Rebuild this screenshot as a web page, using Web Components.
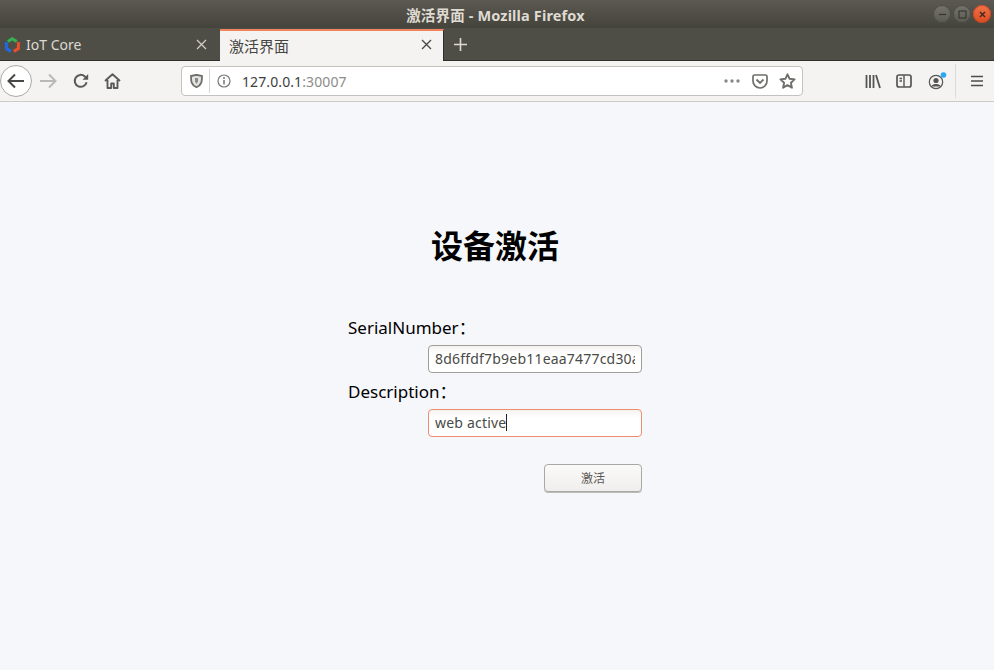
<!DOCTYPE html>
<html lang="zh">
<head>
<meta charset="utf-8">
<title>激活界面</title>
<style>
  html, body { margin: 0; height: 100%; }
  body { width: 994px; height: 670px; overflow: hidden; font-family: "Noto Sans", "Noto Sans CJK SC", sans-serif; }
</style>
</head>
<body>
<browser-window>
  <activate-form></activate-form>
</browser-window>

<script>
const SANS = '"Noto Sans", "Noto Sans CJK SC", sans-serif';

class WindowTitlebar extends HTMLElement {
  connectedCallback() {
    this.attachShadow({ mode: 'open' }).innerHTML = `
      <style>
        :host {
          display: flex; align-items: center; justify-content: center; position: relative;
          height: 28px; box-sizing: border-box; padding-right: 3px;
          background: linear-gradient(#5b5951, #45443c);
          color: #dfdbd2; font: 700 14.5px ${SANS}; letter-spacing: .15px;
        }
        .buttons { position: absolute; right: 3px; top: 5px; display: flex; gap: 2px; }
        .buttons span {
          width: 18px; height: 18px; border-radius: 50%;
          background: linear-gradient(#74736c, #5a5952);
          box-shadow: inset 0 0 0 1px #4a4943;
          display: flex; align-items: center; justify-content: center;
        }
        .buttons .close { background: linear-gradient(#f0734a, #dc4a20); box-shadow: inset 0 0 0 1px #c9481f; }
        svg { display: block; }
      </style>
      <span>激活界面 - Mozilla Firefox</span>
      <div class="buttons">
        <span><svg width="9" height="9"><path d="M1 4.500h7" stroke="#35342f" stroke-width="1.200"/></svg></span>
        <span><svg width="9" height="9"><rect x="1" y="1" width="7" height="7" fill="none" stroke="#35342f" stroke-width="1.100"/></svg></span>
        <span class="close"><svg width="9" height="9"><path d="M2 2l5 5M7 2l-5 5" stroke="#3a2a20" stroke-width="1.400"/></svg></span>
      </div>`;
  }
}

class TabStrip extends HTMLElement {
  connectedCallback() {
    this.attachShadow({ mode: 'open' }).innerHTML = `
      <style>
        :host {
          display: flex; height: 33px; box-sizing: border-box;
          background: #4f4e46; border-bottom: 1px solid #2f2e2a;
          font: 14px ${SANS};
        }
        .tab { display: flex; align-items: center; box-sizing: border-box; position: relative; }
        .tab svg.close { position: absolute; }
        .one { width: 220px; color: #dcdad3; padding: 0 0 0 26px; }
        .one .fav { position: absolute; left: 4px; top: 8px; }
        .one svg.close { left: 196px; top: 11px; }
        .two {
          width: 224px; height: 32px; margin-top: 1px; background: #f4f3f1; color: #45443f;
          border-top: 2px solid #f0845c; border-right: 1px solid #2f2e2a; padding: 0 0 2px 9px;
          font-size: 15px;
        }
        .two svg.close { left: 201px; top: 8px; }
        .add { margin: 9px 0 0 9px; }
      </style>
      <div class="tab one">
        <svg class="fav" width="16" height="17" viewBox="0 0 16 17">
          <path d="M3.800 5.500 8.300 2.800 12.800 5.500" fill="none" stroke="#33b24f" stroke-width="3"/>
          <path d="M2.400 6V12.600L7 15.400" fill="none" stroke="#2268e2" stroke-width="3"/>
          <path d="M14.400 6V12.600L9.800 15.400" fill="none" stroke="#ea4f2a" stroke-width="3"/>
        </svg>
        <span>IoT Core</span>
        <svg class="close" width="11" height="11" viewBox="0 0 11 11"><path d="M1 1l9 9M10 1l-9 9" stroke="#cfcdc6" stroke-width="1.300"/></svg>
      </div>
      <div class="tab two">
        <span>激活界面</span>
        <svg class="close" width="11" height="11" viewBox="0 0 11 11"><path d="M1 1l9 9M10 1l-9 9" stroke="#4a4945" stroke-width="1.400"/></svg>
      </div>
      <svg class="add" width="15" height="15" viewBox="0 0 15 15"><path d="M7.500 1v13M1 7.500h13" stroke="#dcdad3" stroke-width="1.600"/></svg>`;
  }
}

class NavToolbar extends HTMLElement {
  connectedCallback() {
    this.attachShadow({ mode: 'open' }).innerHTML = `
      <style>
        :host {
          display: flex; align-items: center; height: 41px; box-sizing: border-box;
          background: #f4f3f1; border-bottom: 1px solid #cdccc9;
          font: 14px ${SANS}; position: relative;
        }
        svg { display: block; flex: none; }
        .back {
          width: 32px; height: 32px; box-sizing: border-box;
          border: 1px solid #aaa9a6; border-radius: 50%; background: #fff;
          display: flex; align-items: center; justify-content: center; flex: none;
        }
        .forward { margin-left: 8px; }
        .reload { margin-left: 16px; }
        .home { margin-left: 15px; }
        .urlbar {
          margin-left: 60px; width: 622px; height: 30px; box-sizing: border-box; flex: none;
          background: #fff; border: 1px solid #c3c2bf; border-radius: 4px;
          display: flex; align-items: center; color: #3e3e3c;
        }
        .urlbar .shield { margin-left: 8px; }
        .urlbar .sep { width: 1px; height: 24px; background: #d6d5d2; margin-left: 6px; }
        .urlbar .info { margin-left: 7px; }
        .url { margin-left: 11px; font-size: 14px; letter-spacing: .1px; white-space: nowrap; flex: 1; }
        .url b { font-weight: 400; color: #8c8c8a; }
        .dots { margin-right: 12px; }
        .pocket { margin-right: 11px; }
        .star { margin-right: 6px; }
        .lib { margin-left: 62px; }
        .side { margin-left: 15px; }
        .acct { margin-left: 16px; }
        .tsep { width: 1px; height: 34px; background: #dcdbd8; margin-left: 8px; flex: none; }
        .menu { margin-left: 15px; }
      </style>
      <div class="back">
        <svg width="18" height="16" viewBox="0 0 18 16"><path d="M1.500 8H17M8 1.500 1.500 8 8 14.500" fill="none" stroke="#484845" stroke-width="2"/></svg>
      </div>
      <svg class="forward" width="17" height="16" viewBox="0 0 17 16"><path d="M0 8H15.500M9 1.500 15.500 8 9 14.500" fill="none" stroke="#b9b8b5" stroke-width="2"/></svg>
      <svg class="reload" width="16" height="16" viewBox="0 0 16 16"><path d="M13.600 9.200A6 6 0 1 1 11.800 3.400L14 5.400" fill="none" stroke="#5a5a57" stroke-width="2"/><path d="M15.200 1V6.800H9.500Z" fill="#5a5a57"/></svg>
      <svg class="home" width="17" height="16" viewBox="0 0 17 16"><path d="M1 8 8.500 1.300 16 8M3.500 7v8h3.700v-4.500h2.600V15h3.700V7" fill="none" stroke="#5a5a57" stroke-width="1.900" stroke-linejoin="round"/></svg>
      <div class="urlbar">
        <svg class="shield" width="13" height="14" viewBox="0 0 13 14"><path d="M1 2 6.500.8 12 2c0 5 0 8.800-5.500 11.200C1 10.800 1 7 1 2Z" fill="#e4e4e2" stroke="#6e6e6b" stroke-width="1.800"/><path d="M5 4h3v3.500l-1.500 2.500-1.500-2.500Z" fill="#8a8a87"/></svg>
        <span class="sep"></span>
        <svg class="info" width="14" height="14" viewBox="0 0 14 14"><circle cx="7" cy="7" r="6" fill="none" stroke="#777774" stroke-width="1.200"/><path d="M7 6v4.500" stroke="#777774" stroke-width="1.500"/><circle cx="7" cy="3.900" r="1" fill="#777774"/></svg>
        <span class="url">127.0.0.1<b>:30007</b></span>
        <svg class="dots" width="16" height="4" viewBox="0 0 16 4"><circle cx="2" cy="2" r="1.700" fill="#888"/><circle cx="8" cy="2" r="1.700" fill="#888"/><circle cx="14" cy="2" r="1.700" fill="#888"/></svg>
        <svg class="pocket" width="16" height="15" viewBox="0 0 16 15"><path d="M1 2.500C1 1.500 1.500 1 2.500 1h11c1 0 1.500.5 1.500 1.500V7a7 7 0 0 1-14 0Z" fill="none" stroke="#6e6e6b" stroke-width="1.700"/><path d="M4.500 5.500 8 9l3.500-3.500" fill="none" stroke="#6e6e6b" stroke-width="1.800"/></svg>
        <svg class="star" width="17" height="16" viewBox="0 0 17 16"><path d="M8.500 1.300 10.600 5.800 15.600 6.400 11.900 9.800 12.900 14.700 8.500 12.200 4.100 14.700 5.100 9.800 1.400 6.400 6.400 5.800Z" fill="none" stroke="#6e6e6b" stroke-width="1.900" stroke-linejoin="round"/></svg>
      </div>
      <svg class="lib" width="16" height="15" viewBox="0 0 16 15"><path d="M1.500 1v13M5 1v13M8.500 1v13M11 1l4 13" stroke="#555552" stroke-width="1.800" fill="none"/></svg>
      <svg class="side" width="16" height="14" viewBox="0 0 16 14"><rect x="1" y="1" width="14" height="12" rx="2" fill="none" stroke="#555552" stroke-width="1.700"/><path d="M8 1v12M3.500 4.500H6M3.500 7H6" stroke="#555552" stroke-width="1.400"/></svg>
      <svg class="acct" width="19" height="18" viewBox="0 0 19 18"><circle cx="8" cy="10" r="6.700" fill="none" stroke="#555552" stroke-width="1.200"/><circle cx="8" cy="8.500" r="2.600" fill="#555552"/><path d="M3.500 14.500C4.500 11.800 11.500 11.800 12.500 14.500" fill="#555552" stroke="#555552"/><circle cx="15.500" cy="3" r="2.800" fill="#2aa8f2"/></svg>
      <span class="tsep"></span>
      <svg class="menu" width="12" height="12" viewBox="0 0 12 12"><path d="M0 1.500h12M0 6h12M0 10.500h12" stroke="#4d4d4a" stroke-width="1.600"/></svg>`;
  }
}

class BrowserWindow extends HTMLElement {
  connectedCallback() {
    this.attachShadow({ mode: 'open' }).innerHTML = `
      <style>
        :host { display: flex; flex-direction: column; width: 994px; height: 670px; }
        main { flex: 1; background: #f6f7fb; min-height: 0; }
      </style>
      <window-titlebar></window-titlebar>
      <tab-strip></tab-strip>
      <nav-toolbar></nav-toolbar>
      <main><slot></slot></main>`;
  }
}

class ActivateForm extends HTMLElement {
  connectedCallback() {
    this.attachShadow({ mode: 'open' }).innerHTML = `
      <style>
        :host { display: block; padding: 121px 4px 0 0; color: #000; font: 17px ${SANS}; }
        h1 { margin: 0; text-align: center; font-size: 32px; font-weight: 700; line-height: 46px; }
        form { width: 294px; margin: 47px auto 0; display: flex; flex-direction: column; }
        label { display: block; line-height: 24px; height: 24px; white-space: nowrap; }
        label + .field { margin-top: 5px; }
        .field + label { margin-top: 7px; }
        .field {
          margin-left: 80px; height: 28px; box-sizing: border-box;
          border: 1px solid #9f9e9b; border-radius: 4px;
          background: linear-gradient(#f4f3f1, #fff 30%);
          color: #4a4a46; font-size: 14px; line-height: 26px; padding: 0 6px;
        }
        .field span.text { display: block; overflow: hidden; white-space: nowrap; letter-spacing: .2px; }
        .field.focus { border-color: #ee8d6e; }
        .caret { display: inline-block; width: 1px; height: 17px; background: #222; vertical-align: -3px; }
        button {
          align-self: flex-end; margin-top: 27px; width: 98px; height: 28px; box-sizing: border-box;
          border: 1px solid #a9a8a4; border-radius: 4px; padding: 0;
          background: linear-gradient(#fbfafa, #efeeec);
          box-shadow: 0 1px 0 #bdbcb9;
          color: #5a5a55; font: 12px ${SANS};
        }
      </style>
      <h1>设备激活</h1>
      <form>
        <label>SerialNumber：</label>
        <div class="field"><span class="text">8d6ffdf7b9eb11eaa7477cd30a4e</span></div>
        <label>Description：</label>
        <div class="field focus"><span class="text">web active<span class="caret"></span></span></div>
        <button type="button">激活</button>
      </form>`;
  }
}

customElements.define('window-titlebar', WindowTitlebar);
customElements.define('tab-strip', TabStrip);
customElements.define('nav-toolbar', NavToolbar);
customElements.define('browser-window', BrowserWindow);
customElements.define('activate-form', ActivateForm);
</script>
</body>
</html>
